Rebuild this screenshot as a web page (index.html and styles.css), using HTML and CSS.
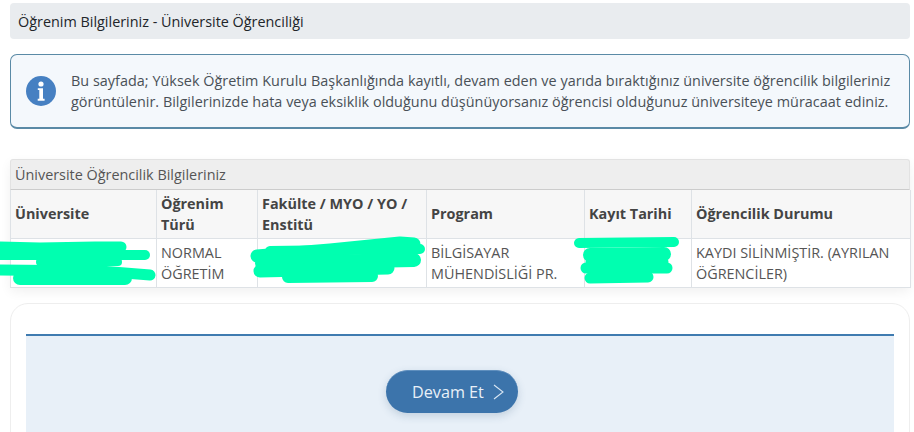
FILE: index.html
```html
<!DOCTYPE html>
<html lang="tr">
<head>
<meta charset="utf-8">
<title>Üniversite Öğrenciliği</title>
<link rel="stylesheet" href="styles.css">
</head>
<body>
<main class="page">
  <div class="title-bar">Öğrenim Bilgileriniz - Üniversite Öğrenciliği</div>
  <div class="alert">
    <svg class="alert-icon" viewBox="0 0 30 30" width="30" height="30" aria-hidden="true">
      <circle cx="15" cy="15" r="15" fill="#4680c2"/>
      <circle cx="15" cy="8" r="2.6" fill="#fff"/>
      <path d="M11.8 12.2h5.2v10.6h1.6v1.9h-6.9v-1.9h1.6v-8.7h-1.5z" fill="#fff"/>
    </svg>
    <p class="alert-text">Bu sayfada; Yüksek Öğretim Kurulu Başkanlığında kayıtlı, devam eden ve yarıda bıraktığınız üniversite öğrencilik bilgileriniz görüntülenir. Bilgilerinizde hata veya eksiklik olduğunu düşünüyorsanız öğrencisi olduğunuz üniversiteye müracaat ediniz.</p>
  </div>
  <section class="panel">
    <div class="panel-head">Üniversite Öğrencilik Bilgileriniz</div>
    <table class="info-table">
      <colgroup>
        <col class="c1"><col class="c2"><col class="c3"><col class="c4"><col class="c5"><col class="c6">
      </colgroup>
      <thead>
        <tr>
          <th>Üniversite</th>
          <th>Öğrenim Türü</th>
          <th>Fakülte / MYO / YO / Enstitü</th>
          <th>Program</th>
          <th>Kayıt Tarihi</th>
          <th>Öğrencilik Durumu</th>
        </tr>
      </thead>
      <tbody>
        <tr>
          <td></td>
          <td>NORMAL ÖĞRETİM</td>
          <td></td>
          <td>BİLGİSAYAR MÜHENDİSLİĞİ PR.</td>
          <td></td>
          <td>KAYDI SİLİNMİŞTİR. (AYRILAN ÖĞRENCİLER)</td>
        </tr>
      </tbody>
    </table>
  </section>
  <section class="card">
    <div class="card-inner">
      <button class="next-btn" type="button">Devam Et
        <svg class="chev" viewBox="0 0 11 16" width="11" height="16" aria-hidden="true"><path d="M1 1l9 7-9 7" fill="none" stroke="#d8e6f3" stroke-width="1.1"/></svg>
      </button>
    </div>
  </section>
  <svg class="scribbles" viewBox="0 0 914 432" width="914" height="432" aria-hidden="true">
    <g fill="none" stroke="#00ffb0" stroke-linecap="round" stroke-linejoin="round">
      <path stroke-width="11" d="M-5 247L40 248L95 247L121 247"/>
      <path stroke-width="10" d="M-5 255L145 255"/>
      <path stroke-width="8" d="M40 262L118 262"/>
      <path stroke-width="11" d="M-5 270L100 271L150 275"/>
      <path stroke-width="14" d="M20 278L125 278"/>
      <path stroke-width="13" d="M257 256L330 250L400 243L414 244"/>
      <path stroke-width="10" d="M270 251L420 249"/>
      <path stroke-width="14" d="M262 263L414 260"/>
      <path stroke-width="13" d="M260 271L388 268"/>
      <path stroke-width="12" d="M288 277L372 276"/>
      <path stroke-width="10" d="M579 243L674 242"/>
      <path stroke-width="14" d="M590 255L664 254"/>
      <path stroke-width="11" d="M586 268L667 268"/>
      <path stroke-width="11" d="M590 278L648 277"/>
      <path stroke-width="9" d="M590 262L664 262"/>
    </g>
  </svg>
</main>
</body>
</html>
```
FILE: styles.css
```css
* { box-sizing: border-box; }
html, body { margin: 0; height: 432px; overflow: hidden; background: #fff; }
body { font-family: "Open Sans", sans-serif; font-size: 14.4px; color: #444; }
.page { position: relative; height: 432px; padding: 3px 4px 0 10px; overflow: hidden; }
.title-bar {
  height: 36px; line-height: 37px; padding-left: 8px;
  background: #e9ecef; border-radius: 4px; color: #212529;
}
.alert {
  display: flex; align-items: center; gap: 15px;
  height: 75px; margin-top: 15px; padding: 0 15px;
  background: #f4f8fc; border: 1px solid #5a8aa6; border-bottom-width: 2px; border-radius: 7px;
}
.alert-icon { flex: none; }
.alert-text { margin: 0; line-height: 21px; color: #495057; letter-spacing: 0.025px; }
.panel { margin-top: 30px; box-shadow: 0 4px 12px rgba(0,0,0,.06); border-radius: 3px; }
.panel-head {
  height: 31px; line-height: 30px; padding-left: 4px;
  background: #eee; border: 1px solid #e2e2e2; border-bottom: 1px solid #ccc;
  border-radius: 3px 3px 0 0; color: #555;
}
.info-table { width: 900px; table-layout: fixed; border-collapse: collapse; color: #555; }
.c1 { width: 146px; } .c2 { width: 101px; } .c3 { width: 169px; }
.c4 { width: 158px; } .c5 { width: 107px; } .c6 { width: 219px; }
.info-table th, .info-table td { border: 1px solid #dee2e6; padding: 0 4px; text-align: left; line-height: 21px; }
.info-table th { height: 48px; background: #f7f7f7; font-weight: 700; color: #444; border-top: 0; }
.info-table td { height: 49px; background: #fff; }
.card {
  height: 160px; margin-top: 15px; padding: 30px 15px 0;
  border: 1px solid #eee; border-radius: 18px 18px 0 0;
}
.card-inner {
  display: flex; justify-content: center; align-items: flex-start;
  height: 130px; padding: 34px 16px 0 0;
  background: #e8f0f8; border-top: 2px solid #3f7bb0;
}
.next-btn {
  display: flex; align-items: center; justify-content: flex-start; gap: 9px;
  width: 132px; height: 43px; padding: 0 0 0 26px;
  background: #3c74ab; color: #e8f0f8; border: 0; border-top: 1px solid #5f8fbe; border-radius: 22px;
  font: 16.2px "Open Sans", sans-serif; box-shadow: 0 3px 8px rgba(40,80,120,.2);
}
.chev { flex: none; }
.scribbles { position: absolute; left: 0; top: 0; pointer-events: none; }
```
